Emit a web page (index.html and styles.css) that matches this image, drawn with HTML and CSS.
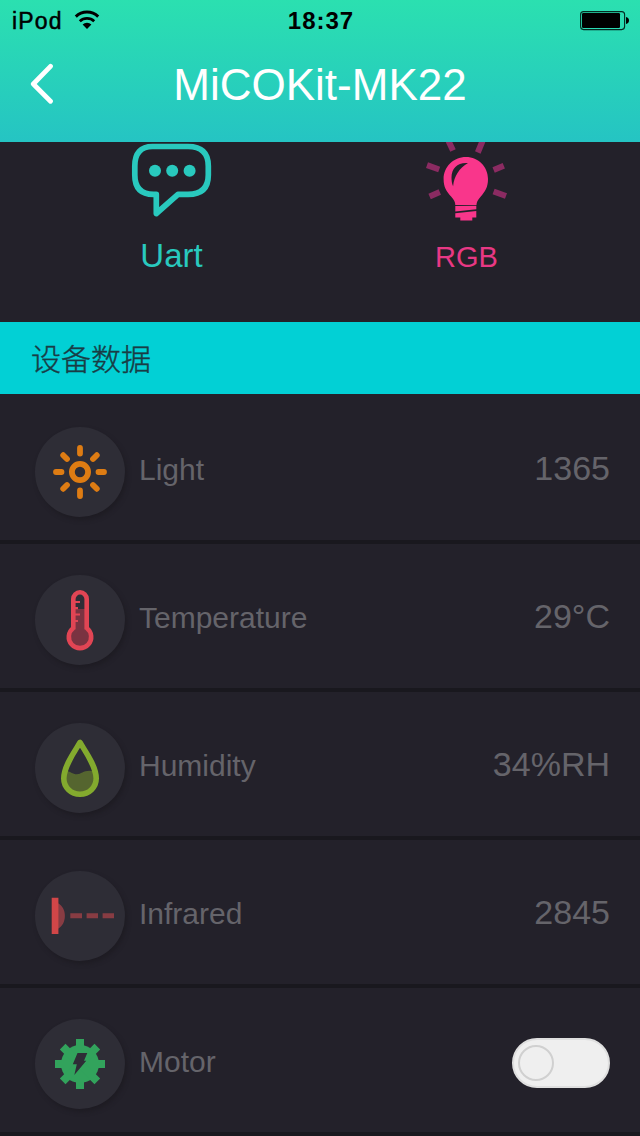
FILE: index.html
```html
<!DOCTYPE html>
<html lang="zh-CN">
<head>
<meta charset="utf-8">
<title>MiCOKit-MK22</title>
<link rel="stylesheet" href="styles.css">
</head>
<body>
<div class="screen">
  <header class="header">
    <div class="status">
      <div class="carrier">
        <span>iPod</span>
        <svg class="wifi" width="26" height="20" viewBox="0 0 26 20">
          <path d="M1.800 6.600a16.200 16.200 0 0 1 22.400 0" fill="none" stroke="#000" stroke-width="3"/>
          <path d="M5.800 11.200a10.600 10.600 0 0 1 14.400 0" fill="none" stroke="#000" stroke-width="2.800"/>
          <path d="M8.600 14.400a6.600 6.600 0 0 1 8.800 0L13 19z"/>
        </svg>
      </div>
      <span class="time">18:37</span>
      <svg class="battery" width="50" height="20" viewBox="0 0 50 20">
        <rect x=".6" y=".6" width="44" height="18" rx="3" fill="none" stroke="#052b22" stroke-width="1.100"/>
        <rect x="2" y="2" width="38" height="15" rx="1.200"/>
        <path d="M46 6c2 .4 3 1.800 3 3.500s-1 3.100-3 3.500z"/>
      </svg>
    </div>
    <div class="nav">
      <svg class="back" width="26" height="42" viewBox="0 0 26 42">
        <path d="M22.500 3.300L5.300 21l17.200 17.200" fill="none" stroke="#fff" stroke-width="4.800" stroke-linecap="round" stroke-linejoin="round"/>
      </svg>
      <h1 class="title">MiCOKit-MK22</h1>
    </div>
  </header>

  <section class="tools">
    <div class="tool uart">
      <svg width="90" height="80" viewBox="0 0 90 80">
        <path d="M25.500 4.500H61Q81.300 4.500 81.300 24V33Q81.300 52.400 61 52.400H51L29.300 71.500V52.400H26.500Q7.800 52.400 7.800 33V24Q7.800 4.500 25.500 4.500Z" fill="none" stroke="#29c9be" stroke-width="5.700" stroke-linejoin="round"/>
        <g fill="#29c9be"><circle cx="28" cy="28.700" r="6"/><circle cx="45.200" cy="28.700" r="6"/><circle cx="62.600" cy="28.700" r="6"/></g>
      </svg>
      <span class="tool-name">Uart</span>
    </div>
    <div class="tool rgb">
      <svg width="90" height="80" viewBox="0 0 90 80">
        <g stroke="#8b2b62" stroke-width="6">
          <path d="M27.500-1l4.500 9.500M61.500-1l-4.700 11.500M6 23.200l12.200 4.300M8.600 54.400l10.200-4.400M72.600 28l10.200-4.200M72.600 49.500l12.400 4.500"/>
        </g>
        <path fill="#f9368b" d="M45 15C32.300 15 22.600 24.800 22.600 37c0 8.500 3 12.500 7.500 17.500 3.200 3.500 4.100 5.500 4.200 8.500h21.200c.1-3 1.100-5 4.300-8.500C64 49.500 67 45.500 67 37c0-12.200-9.500-22-22-22z"/>
        <path fill="#23212a" d="M47 21c-10-1-16.500 5-16.500 14.500 0 3.200.4 6.300 1.600 8.800C33 34 38.500 26 47 21z"/>
        <path fill="#f9368b" d="M34.300 64l21-.2v3.400l-21 2.300zM34.300 71.300l21-2.400v6.600h-4V78.500H39.300v-3h-5z"/>
      </svg>
      <span class="tool-name">RGB</span>
    </div>
  </section>

  <h2 class="section-title">设备数据</h2>

  <ul class="list">
    <li class="row">
      <svg class="icon" width="90" height="90" viewBox="0 0 90 90">
        <g fill="none" stroke="#de7c13" stroke-width="5.800" stroke-linecap="round">
          <circle cx="45" cy="45" r="8.100"/>
          <path d="M45 21v5.500M45 63.500V69M21 45h5.500M63.500 45H69M28.200 28.200l3.800 3.800M58 58l3.800 3.800M28.200 61.800L32 58M58 32l3.800-3.800"/>
        </g>
      </svg>
      <span class="label">Light</span><span class="value">1365</span>
    </li>
    <li class="row">
      <svg class="icon" width="90" height="90" viewBox="0 0 90 90">
        <path fill="#7a3341" d="M40 34h10v20a10 10 0 1 1-10 0z"/>
        <path fill="none" stroke="#e14554" stroke-width="4.600" d="M38.300 53V24a6.700 6.700 0 0 1 13.400 0v29a11.200 11.200 0 1 1-13.400 0z"/>
        <path fill="none" stroke="#e14554" stroke-width="2.200" d="M40 27h5M40 33.200h3M40 39.500h5M40 46h3"/>
      </svg>
      <span class="label">Temperature</span><span class="value">29°C</span>
    </li>
    <li class="row">
      <svg class="icon" width="90" height="90" viewBox="0 0 90 90">
        <path fill="#55652f" d="M30 48c5-.5 7 3.300 12 3.300S49 46 60 48.500c3 10-3 23-15 23S27 60 30 48z"/>
        <path fill="none" stroke="#83aa2e" stroke-width="5.600" stroke-linejoin="round" d="M45 19.500C40 28 28.800 43 28.800 55.500a16.200 15.800 0 0 0 32.400 0C61.200 43 50 28 45 19.500z"/>
      </svg>
      <span class="label">Humidity</span><span class="value">34%RH</span>
    </li>
    <li class="row">
      <svg class="icon" width="90" height="90" viewBox="0 0 90 90">
        <path fill="#883c43" d="M23 32.300c9.300 4.500 9.300 20.900 0 25.400zM35.300 42.300H47v5H35.300zM51.600 42.300H63v5H51.600zM67.600 42.300H79v5H67.600z"/>
        <path fill="#d14648" d="M16.700 26.700h6.700v36.400h-6.700z"/>
      </svg>
      <span class="label">Infrared</span><span class="value">2845</span>
    </li>
    <li class="row">
      <svg class="icon" width="90" height="90" viewBox="0 0 90 90">
        <g fill="#32a35c">
          <circle cx="45" cy="45" r="19"/>
          <path d="M41 20h8v50h-8zM20 41h50v8H20z"/>
          <path transform="rotate(45 45 45)" d="M41 20.500h8v49h-8zM20.500 41h49v8h-49z"/>
        </g>
        <path fill="#2e2d36" d="M42.500 34h9.800l-3.300 7.700h2.300L39.300 56l2.500-10.700h-4z"/>
      </svg>
      <span class="label">Motor</span><span class="toggle"><span class="knob"></span></span>
    </li>
  </ul>
</div>
</body>
</html>
```
FILE: styles.css
```css
* { box-sizing: border-box; }

body {
  margin: 0;
  background: #23212a;
  font-family: "Liberation Sans", "Noto Sans CJK SC", sans-serif;
}

.screen {
  width: 640px;
  height: 1136px;
  overflow: hidden;
}

.header {
  height: 142px;
  background: linear-gradient(#2be0b0, #25c4c3);
}

.status {
  display: grid;
  grid-template-columns: 1fr auto 1fr;
  align-items: center;
  height: 40px;
  padding: 1px 10px 0 12px;
  font-size: 23px;
  color: #000;
}

.carrier {
  display: flex;
  align-items: center;
  gap: 11px;
  padding-top: 1px;
  letter-spacing: 1.2px;
  -webkit-text-stroke: 0.5px #000;
}

.wifi { margin-top: -2px; }

.time {
  padding-top: 1px;
  font-size: 24px;
  font-weight: bold;
  letter-spacing: 1px;
}

.battery { justify-self: end; }

.nav {
  display: grid;
  grid-template-columns: 60px 1fr 60px;
  align-items: center;
  height: 88px;
}

.back { margin: 0 0 0 28px; }

.title {
  margin: 0;
  padding-top: 2px;
  color: #fff;
  font-size: 44px;
  font-weight: normal;
  line-height: 50px;
  text-align: center;
}

.tools {
  display: grid;
  grid-template-columns: 294px 294px;
  height: 180px;
  padding-left: 25px;
  overflow: hidden;
}

.tool {
  display: flex;
  flex-direction: column;
  align-items: center;
}

.tool svg { display: block; }
.tool-name { margin-top: 16px; line-height: 36px; }
.uart { color: #29c9be; font-size: 33px; }
.uart .tool-name { margin-left: -1px; }
.rgb { color: #e83884; font-size: 29px; }
.rgb .tool-name { margin: 17px 0 0 1px; }

.section-title {
  height: 72px;
  margin: 0;
  padding-left: 31px;
  background: #02d0d5;
  color: #193c45;
  font-size: 30px;
  font-weight: 300;
  line-height: 75px;
  -webkit-text-stroke: 0.4px #193c45;
}

.list {
  margin: 0;
  padding: 2px 0 0;
  list-style: none;
}

.row {
  display: flex;
  align-items: flex-start;
  height: 148px;
  padding: 31px 30px 0 35px;
  border-bottom: 4px solid #19181e;
  color: #65646a;
}

.icon {
  flex: none;
  border-radius: 50%;
  background: #2e2d36;
  box-shadow: 2px 3px 4px #1e1c23;
}

.label {
  flex: 1;
  margin: 26px 0 0 14px;
  font-size: 30px;
  line-height: 34px;
}

.value {
  margin-top: 21px;
  font-size: 34px;
  line-height: 40px;
}

.toggle {
  width: 98px;
  height: 50px;
  margin-top: 19px;
  padding: 5px 4px;
  border: 2px solid #dfdfdf;
  border-radius: 25px;
  background: #efefef;
}

.knob {
  display: block;
  width: 36px;
  height: 36px;
  border: 2px solid #d0d0d0;
  border-radius: 50%;
}
```
